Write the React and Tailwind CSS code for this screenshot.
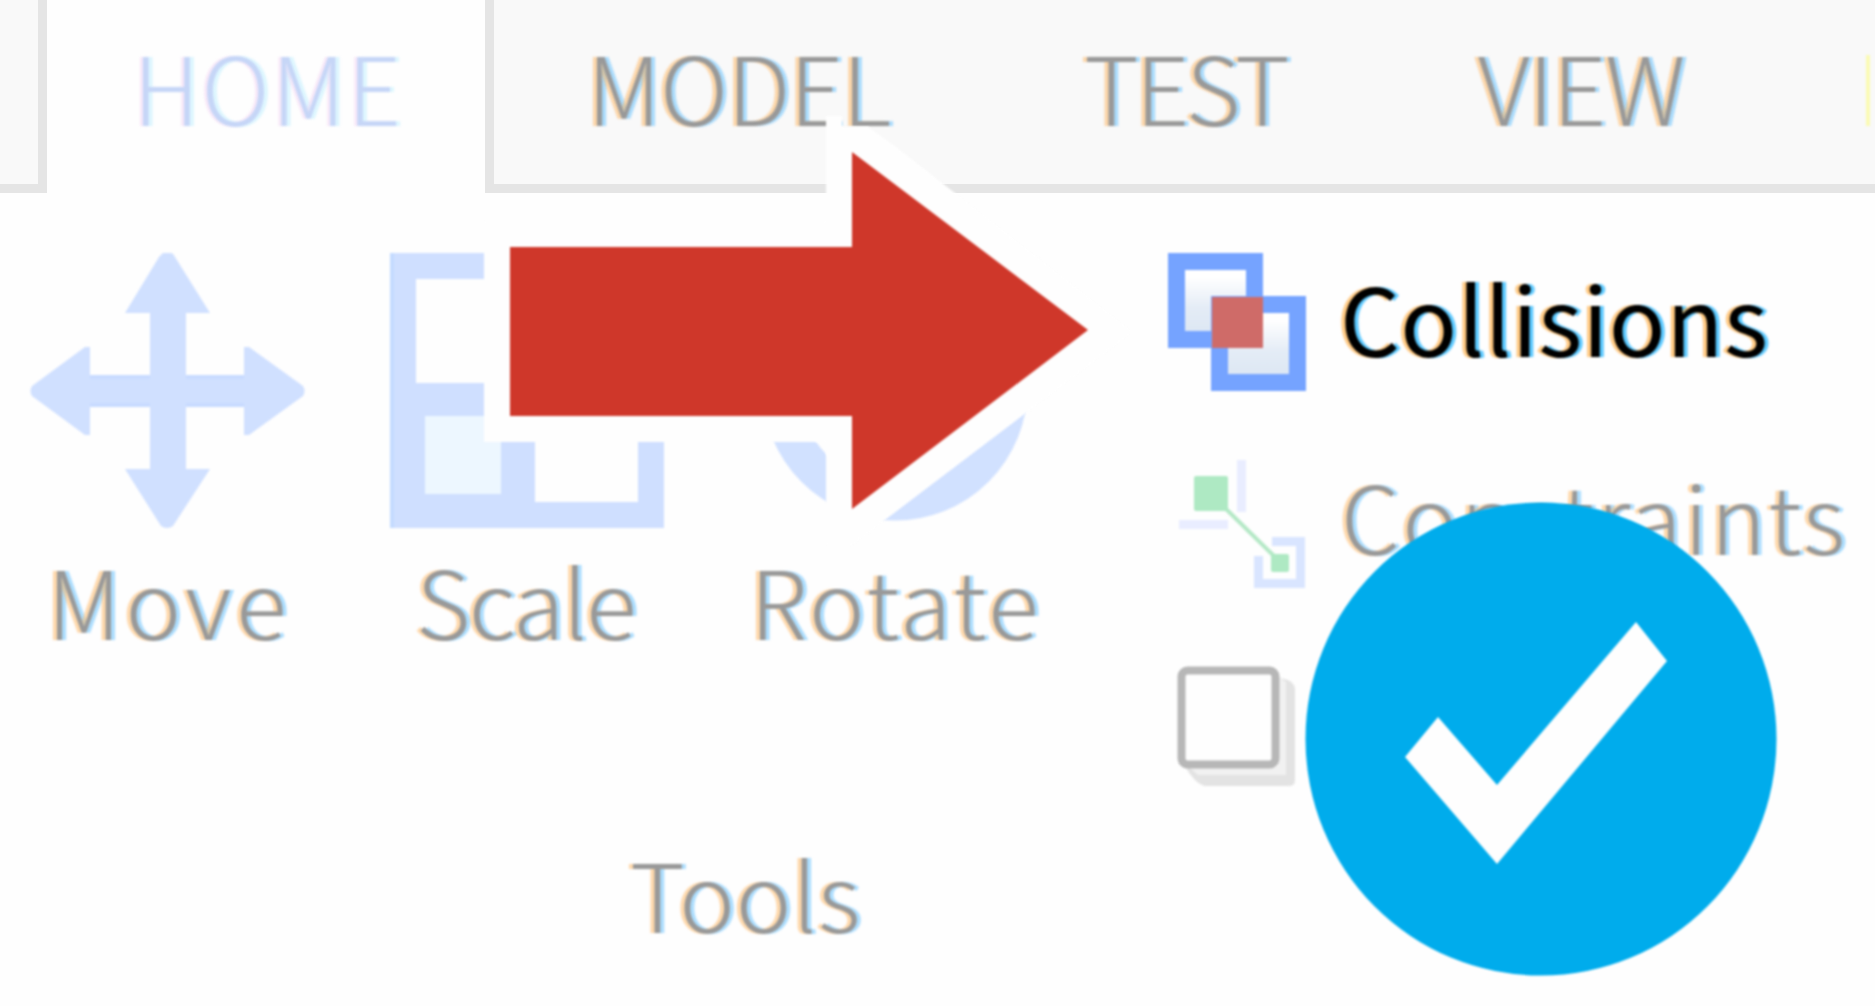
const fringe =
  "font-light [text-shadow:-4px_0_1px_rgba(255,180,90,0.5),4px_0_1px_rgba(90,190,255,0.5)]";

function Label({ children, className = "" }) {
  return (
    <span
      className={`block h-[100px] whitespace-nowrap text-[94px] leading-[100px] blur-[1.2px] ${className}`}
    >
      {children}
    </span>
  );
}

function MoveIcon() {
  return (
    <svg width="275" height="275" viewBox="30 253 275 275" fill="#d0e0ff" className="blur-[1px]">
      <path d="M163 253h8q2 0 4 4L210 313H186V375H244V347L249 347L303 386Q306 391 303 396L249 435H244V407H186V469H210L173 526Q167 530 161 526L125 469H150V407H90V435H85L32 396Q29 391 32 386L85 347H90V375H150V313H125L159 257Z" />
      <path fill="#c8dbff" d="M90 375h60v4H90zM186 375h58v4h-58zM90 403h60v4H90zM186 403h58v4h-58z" />
    </svg>
  );
}

function ScaleIcon() {
  return (
    <svg width="275" height="275" viewBox="390 253 275 275" className="blur-[1px]">
      <path fill="#edf7ff" d="M424 415h80v80h-80z" />
      <path
        fill="#cfdfff"
        fillRule="evenodd"
        d="M390 253H664V528H390ZM416 279V383H535V502H638V279ZM425 416V494H501V416Z"
      />
      <path fill="#c4dbff" d="M390 253h4v275h-4z" />
    </svg>
  );
}

function RotateIcon() {
  return (
    <svg width="275" height="275" viewBox="760 253 275 275" className="blur-[1px]">
      <circle cx="895" cy="388" r="114" fill="none" stroke="#d1e1ff" strokeWidth="37" />
    </svg>
  );
}

function CollisionsIcon() {
  return (
    <svg width="140" height="140" viewBox="1168 253 140 140" className="blur-[1px]">
      <defs>
        <linearGradient id="pane" x1="0" y1="0" x2="0" y2="1">
          <stop offset="0.2" stopColor="#ffffff" />
          <stop offset="0.6" stopColor="#e4ecf6" />
          <stop offset="1" stopColor="#dbe6f3" />
        </linearGradient>
      </defs>
      <rect x="1176.5" y="261.5" width="78" height="78" fill="url(#pane)" stroke="#75a3ff" strokeWidth="17" />
      <rect x="1219.5" y="304.5" width="78" height="78" fill="url(#pane)" stroke="#75a3ff" strokeWidth="17" />
      <rect x="1212" y="297" width="51" height="51" fill="#cf6b68" />
    </svg>
  );
}

function ConstraintsIcon() {
  return (
    <svg width="140" height="140" viewBox="1168 453 140 140" className="blur-[1px]">
      <path fill="#e9edff" d="M1237 460h9v52h-9zM1179 520h49v9h-49z" />
      <path fill="none" stroke="#d9e5ff" strokeWidth="9" d="M1272 541.5H1300.5V583.5H1258.5V556" />
      <path stroke="#b4e8c6" strokeWidth="4" d="M1224 507L1275 557" />
      <rect x="1194" y="476" width="34" height="35" rx="2" fill="#aee9c3" />
      <rect x="1271" y="554" width="18" height="18" rx="2" fill="#aee9c3" />
    </svg>
  );
}

function CheckboxIcon() {
  return (
    <svg width="140" height="140" viewBox="1168 660 140 140" className="blur-[1px]">
      <path fill="#e3e3e3" d="M1190 768H1280V678Q1295 680 1295 690V780Q1295 786 1289 786H1204Q1194 782 1186 768Z" />
      <path fill="#f1f1f1" d="M1188 766H1278V676L1286 682V775H1198Z" />
      <rect x="1181.5" y="670.5" width="94" height="94" rx="6" fill="#fefefe" stroke="#b7b7b7" strokeWidth="8" />
    </svg>
  );
}

function ArrowOverlay() {
  return (
    <svg className="absolute left-[470px] top-[90px] blur-[1px]" width="670" height="470" viewBox="470 90 670 470">
      <path fill="#fefefe" d="M484 221H826V116H842V127H868L896 147L1130 330V334L852 545H826V442H484Z" />
      <path fill="#cf372a" d="M510 247H852V152L1088 330L852 509V416H510Z" />
    </svg>
  );
}

function CheckBadge() {
  return (
    <svg className="absolute left-[1304px] top-[501px] blur-[1px]" width="474" height="478" viewBox="1304 501 474 478">
      <ellipse cx="1541" cy="739" rx="235.5" ry="236.5" fill="#00acec" />
      <path fill="#fefefe" d="M1405 757L1438 717L1497 785L1636 622L1667 661L1497 864Z" />
    </svg>
  );
}

export default function App() {
  return (
    <div className="relative h-[1006px] w-[1875px] overflow-hidden bg-[#fefefe] font-['Noto_Sans_CJK_SC','Noto_Sans',sans-serif] text-[#999]">
      <header className="flex h-[193px]">
        <div className="w-[47px] border-r-9 border-b-9 border-[#e5e5e5] bg-[#f9f9f9]" />
        <div className="w-[438px] pt-[35px] pl-[86px]">
          <Label className="font-light tracking-[1.8px] text-[#c6d6f7] [text-shadow:-3px_0_1px_rgba(240,200,240,0.4),4px_0_1px_rgba(190,240,255,0.5)]">HOME</Label>
        </div>
        <nav className="flex flex-1 overflow-hidden border-b-9 border-l-9 border-[#e5e5e5] bg-[#f9f9f9] pt-[35px] pl-[93px]">
          <div className="w-[497px] shrink-0"><Label className={`tracking-[-1px] ${fringe}`}>MODEL</Label></div>
          <div className="w-[394px] shrink-0"><Label className={`tracking-[-3.4px] ${fringe}`}>TEST</Label></div>
          <div className="w-[388px] shrink-0"><Label className={`tracking-[-1.4px] ${fringe}`}>VIEW</Label></div>
          <div className="mt-[20px] h-[71px] w-[4px] shrink-0 bg-[#fbfbb4] blur-[1px]" />
        </nav>
      </header>

      <main className="flex h-[813px]">
        <section className="flex w-[1168px] flex-col pt-[60px]">
          <div className="flex h-[396px] pl-[30px]">
            <div className="w-[360px]">
              <MoveIcon />
              <Label className={`mt-[21px] ml-[17px] tracking-[4.4px] ${fringe}`}>Move</Label>
            </div>
            <div className="w-[370px]">
              <ScaleIcon />
              <Label className={`mt-[21px] ml-[26px] tracking-[-1.7px] ${fringe}`}>Scale</Label>
            </div>
            <div className="w-[300px]">
              <RotateIcon />
              <Label className={`mt-[21px] -ml-[10px] tracking-[2.9px] ${fringe}`}>Rotate</Label>
            </div>
          </div>
          <div className="mt-[193px] pl-[630px]">
            <Label className={`tracking-[0.7px] ${fringe}`}>Tools</Label>
          </div>
        </section>

        <section className="flex flex-col pt-[60px]">
          <div className="flex h-[200px]">
            <CollisionsIcon />
            <Label className="mt-[13px] ml-[32px] tracking-[0.4px] text-black [text-shadow:-4px_0_1px_rgba(255,170,60,0.65),4px_0_1px_rgba(0,170,255,0.65)]">Collisions</Label>
          </div>
          <div className="flex h-[207px]">
            <ConstraintsIcon />
            <Label className={`mt-[11px] ml-[33px] tracking-[2.3px] ${fringe}`}>Constraints</Label>
          </div>
          <CheckboxIcon />
        </section>
      </main>

      <ArrowOverlay />
      <CheckBadge />
    </div>
  );
}
